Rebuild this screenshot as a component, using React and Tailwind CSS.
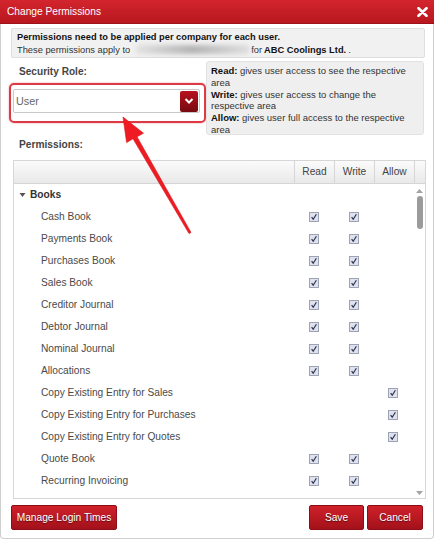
import React from "react";

function Check() {
  return (
    <span className="inline-flex items-center justify-center w-[10px] h-[10px] border border-[#9ea3b4] bg-[#dfe2ee]">
      <svg width="8" height="8" viewBox="0 0 8 8">
        <path d="M1.6 4.2 L3.2 6.2 L6.4 1.2" fill="none" stroke="#2a3350" strokeWidth="1.2" />
      </svg>
    </span>
  );
}

const rows = [
  ["Cash Book", 1, 1, 0],
  ["Payments Book", 1, 1, 0],
  ["Purchases Book", 1, 1, 0],
  ["Sales Book", 1, 1, 0],
  ["Creditor Journal", 1, 1, 0],
  ["Debtor Journal", 1, 1, 0],
  ["Nominal Journal", 1, 1, 0],
  ["Allocations", 1, 1, 0],
  ["Copy Existing Entry for Sales", 0, 0, 1],
  ["Copy Existing Entry for Purchases", 0, 0, 1],
  ["Copy Existing Entry for Quotes", 0, 0, 1],
  ["Quote Book", 1, 1, 0],
  ["Recurring Invoicing", 1, 1, 0],
];

function RedButton({ children, className }) {
  return (
    <button
      className={
        "h-[25px] rounded-[2px] border border-[#8c0d15] bg-linear-to-b from-[#d0212b] to-[#a3111a] text-white text-[10.2px] [text-shadow:0_1px_1px_rgba(0,0,0,0.5)] " +
        className
      }
    >
      {children}
    </button>
  );
}

function DescLine({ label, first, rest }) {
  return (
    <>
      <div className="flex">
        <b className="text-[#111] mr-[2.5px]">{label}</b>
        <span>{first}</span>
      </div>
      <div>{rest}</div>
    </>
  );
}

export default function App() {
  return (
    <div
      className="relative w-[434px] h-[539px] overflow-hidden bg-white"
      style={{ fontFamily: '"Liberation Sans", Arial, sans-serif' }}
    >
      {/* header */}
      <div className="h-[24px] flex items-center justify-between pl-[7px] pr-[6px] bg-linear-to-b from-[#d3252d] to-[#b8171f] border-b border-[#9c1018]">
        <span className="text-white text-[10.2px]">Change Permissions</span>
        <svg width="11" height="10" viewBox="0 0 11 10">
          <path d="M1.5 1.2 L9.5 8.8 M9.5 1.2 L1.5 8.8" stroke="white" strokeWidth="2.6" strokeLinecap="round" />
        </svg>
      </div>

      {/* body */}
      <div className="h-[515px] border-x border-b border-[#cfcfcf] rounded-b-[4px] px-[8px] flex flex-col">
        {/* info */}
        <div className="ml-[2px] mt-[4px] w-[414px] h-[30px] rounded-[2px] border border-[#dedede] bg-[#f1f1f1] pl-[5px] pt-[2px] text-[9.3px] leading-[12.5px] text-[#111]">
          <div className="font-bold">Permissions need to be applied per company for each user.</div>
          <div className="text-[#333] flex items-center">
            <span>These permissions apply to</span>
            <span className="ml-[6px] inline-block w-[113px] h-[9px] bg-linear-to-r from-[#e2e2e2] via-[#b4b4b4] to-[#dedede] blur-[2px]" />
            <span className="ml-[2px]">for </span>
            <span className="font-bold text-[#111] ml-[2px]">ABC Coolings Ltd.</span>
            <span className="ml-[2px]">.</span>
          </div>
        </div>

        {/* role + description */}
        <div className="flex mt-[3px]">
          <div className="w-[197px]">
            <div className="pl-[10px] pt-[5px] text-[10.1px] leading-[12px] font-bold text-[#444]">Security Role:</div>
            <div className="mt-[5px] h-[40px] rounded-[5px] border-2 border-[#de3a46] shadow-[0_0_2px_rgba(220,40,50,0.5)] pl-[2px] pt-[4px]">
              <div className="w-[187px] h-[24px] border border-[#c9c9c9] bg-white rounded-[2px] flex items-center justify-between pr-[1px]">
                <span className="pl-[2px] text-[10.8px] text-[#666]">User</span>
                <span className="w-[18px] h-[21px] rounded-[2px] bg-linear-to-b from-[#b8121d] to-[#780a11] flex items-center justify-center">
                  <svg width="10" height="8" viewBox="0 0 10 8">
                    <path d="M1.5 2 L5 5.5 L8.5 2" fill="none" stroke="white" strokeWidth="2" />
                  </svg>
                </span>
              </div>
            </div>
          </div>
          <div className="w-[218px] h-[74px] rounded-[3px] border border-[#e2e2e2] bg-[#efefef] pl-[4px] pt-[3px] text-[9.5px] leading-[11.8px] text-[#333]">
            <DescLine label="Read:" first="gives user access to see the respective" rest="area" />
            <DescLine label="Write:" first="gives user access to change the" rest="respective area" />
            <DescLine label="Allow:" first="gives user full access to the respective" rest="area" />
          </div>
        </div>

        <div className="pl-[10px] mt-[4px] text-[10.2px] leading-[12px] font-bold text-[#444]">Permissions:</div>

        {/* table */}
        <div className="ml-[4px] mt-[9px] w-[413px] h-[339px] border border-[#d6d6d6] flex flex-col overflow-hidden">
          <div className="h-[23px] flex border-b border-[#d6d6d6] bg-linear-to-b from-[#fbfbfb] to-[#e9e9e9] text-[10.2px] text-[#444]">
            <div className="w-[281px] border-r border-[#d6d6d6]" />
            <div className="w-[40px] border-r border-[#d6d6d6] flex items-center justify-center">Read</div>
            <div className="w-[40px] border-r border-[#d6d6d6] flex items-center justify-center">Write</div>
            <div className="w-[40px] border-r border-[#d6d6d6] flex items-center justify-center">Allow</div>
            <div className="flex-1" />
          </div>
          <div className="flex flex-1 min-h-0">
            <div className="flex-1 flex flex-col">
              <div className="h-[22px] flex items-center pl-[5px] text-[10.2px] font-bold text-[#333]">
                <svg width="7" height="6" viewBox="0 0 7 6" className="mr-[4px]">
                  <path d="M0.5 1 L6.5 1 L3.5 5 Z" fill="#555" />
                </svg>
                Books
              </div>
              {rows.map(([name, r, w, a]) => (
                <div key={name} className="h-[22px] flex items-center text-[10.2px] text-[#4a4a4a]">
                  <div className="w-[280px] pl-[27px]">{name}</div>
                  <div className="w-[40px] flex justify-center">{r ? <Check /> : null}</div>
                  <div className="w-[40px] flex justify-center">{w ? <Check /> : null}</div>
                  <div className="w-[38px] flex justify-center">{a ? <Check /> : null}</div>
                </div>
              ))}
            </div>
            {/* scrollbar */}
            <div className="w-[11px] flex flex-col items-center pt-[5px] pb-[3px]">
              <svg width="7" height="4" viewBox="0 0 7 4">
                <path d="M0 4 L3.5 0 L7 4 Z" fill="#a3a3a3" />
              </svg>
              <div className="mt-[3px] w-[6px] h-[33px] rounded-[3px] bg-[#9b9b9b]" />
              <div className="flex-1" />
              <svg width="7" height="4" viewBox="0 0 7 4">
                <path d="M0 0 L7 0 L3.5 4 Z" fill="#a3a3a3" />
              </svg>
            </div>
          </div>
        </div>

        {/* buttons */}
        <div className="mt-[6px] flex items-center pl-[2px] pr-[2px]">
          <RedButton className="w-[106px]">Manage Login Times</RedButton>
          <div className="flex-1" />
          <RedButton className="w-[55px]">Save</RedButton>
          <RedButton className="w-[56px] ml-[3px]">Cancel</RedButton>
        </div>
      </div>

      {/* annotation arrow */}
      <svg className="absolute left-0 top-0 pointer-events-none" width="434" height="539">
        <polygon
          points="123,117 143.5,133.2 137,136.8 191,232.4 189,233.6 133,138.8 126.6,142.6"
          fill="#ee1b22"
          stroke="#d8121a"
          strokeWidth="0.6"
          strokeLinejoin="round"
        />
      </svg>
    </div>
  );
}
